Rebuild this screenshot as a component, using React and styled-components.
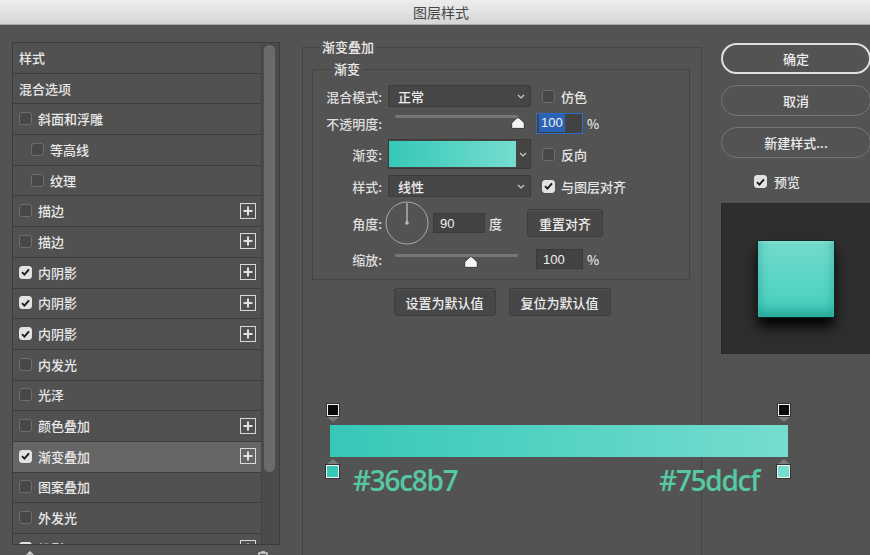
import React from "react";
import styled, { createGlobalStyle } from "styled-components";

const GlobalStyle = createGlobalStyle`
  html, body { margin: 0; padding: 0; background: #535353; }
  body { font-family: "Noto Sans CJK SC", "Noto Sans", sans-serif; }
  * { box-sizing: border-box; }
`;

const Window = styled.div`
  width: 870px;
  height: 555px;
  overflow: hidden;
  display: flex;
  flex-direction: column;
  background: #535353;
  color: #e6e6e6;
  font-size: 13px;
  font-weight: 500;
`;

const TitleBar = styled.div`
  height: 25px;
  flex: none;
  display: flex;
  align-items: center;
  justify-content: center;
  padding-left: 12px;
  background: linear-gradient(#ededed, #d5d5d5);
  border-bottom: 1px solid #a8a8a8;
  color: #474747;
  font-size: 14px;
  font-weight: 400;
`;

const Body = styled.div`
  flex: 1;
  display: flex;
  align-items: flex-start;
  min-height: 0;
`;

/* ---------- left list ---------- */
const LeftPanel = styled.div`
  flex: none;
  margin: 17px 0 0 12px;
  width: 268px;
  display: flex;
  flex-direction: column;
`;

const ListBox = styled.div`
  height: 503px;
  display: flex;
  border: 1px solid #3c3c3c;
  overflow: hidden;
`;

const List = styled.div`
  flex: 1;
  display: flex;
  flex-direction: column;
`;

const Row = styled.div`
  flex: none;
  height: 30.7px;
  display: flex;
  align-items: center;
  gap: 6px;
  padding: 0 5px 1px ${(p) => (p.$indent ? 18 : 6)}px;
  border-bottom: 1px solid #3e3e3e;
  background: ${(p) => (p.$selected ? "#666666" : "#515151")};
  color: #e8e8e8;
  font-size: 13px;
  white-space: nowrap;
`;

const ScrollTrack = styled.div`
  flex: none;
  width: 18px;
  background: #4b4b4b;
  border-left: 1px solid #454545;
  padding: 2px 4px 0 2px;
`;

const ScrollThumb = styled.div`
  height: 427px;
  border-radius: 6px;
  background: #6b6b6b;
`;

const ListToolbar = styled.div`
  height: 20px;
  display: flex;
  justify-content: space-between;
  padding: 6px 12px 0 14px;
`;

const ToolIcon = styled.svg`
  flex: none;
`;

const CheckBoxBox = styled.span`
  flex: none;
  width: 13px;
  height: 13px;
  border-radius: 3px;
  display: inline-flex;
  align-items: center;
  justify-content: center;
  background: ${(p) => (p.$checked ? "#e2e2e2" : "#474747")};
  border: 1px solid ${(p) => (p.$checked ? "#e2e2e2" : "#6e6e6e")};
`;

const PlusBox = styled.span`
  flex: none;
  margin-left: auto;
  width: 16px;
  height: 16px;
  border: 1.5px solid #d8d8d8;
  display: inline-flex;
  align-items: center;
  justify-content: center;
`;

const Check = ({ checked }) => (
  <CheckBoxBox $checked={checked}>
    {checked && (
      <svg width="9" height="8" viewBox="0 0 9 8">
        <path d="M1 4.2 L3.4 6.6 L8 1.3" fill="none" stroke="#1c1c1c" strokeWidth="1.9" />
      </svg>
    )}
  </CheckBoxBox>
);

const Plus = () => (
  <PlusBox>
    <svg width="10" height="10" viewBox="0 0 10 10">
      <path d="M5 0.5v9M0.5 5h9" stroke="#e2e2e2" strokeWidth="2" />
    </svg>
  </PlusBox>
);

/* ---------- middle ---------- */
const Middle = styled.div`
  flex: none;
  margin: 14px 0 0 22px;
  width: 400px;
`;

const OuterSet = styled.fieldset`
  margin: 0;
  min-width: 0;
  height: 560px;
  padding: 0 11px 0 9px;
  border: 1px solid #444444;
`;

const Legend = styled.legend`
  margin-left: ${(p) => p.$ml}px;
  padding: 0 3px;
  font-size: 13px;
  line-height: 16px;
  color: #ececec;
`;

const InnerSet = styled.fieldset`
  margin: 6px 0 0 0;
  min-width: 0;
  padding: 8px 8px 6px 9px;
  border: 1px solid #444444;
`;

const FormRow = styled.div`
  display: flex;
  align-items: center;
  height: ${(p) => p.$h}px;
  margin-top: ${(p) => p.$mt || 0}px;
`;

const Label = styled.span`
  flex: none;
  width: 60px;
  margin-right: 6px;
  text-align: right;
  color: #dedede;
  white-space: nowrap;
`;

const Select = styled.div`
  flex: none;
  width: 143px;
  height: 22px;
  display: flex;
  align-items: center;
  justify-content: space-between;
  padding: 0 5px 0 9px;
  background: #464646;
  border: 1px solid #3b3b3b;
  border-radius: 2px;
  color: #eeeeee;
`;

const Chevron = () => (
  <svg width="8" height="5" viewBox="0 0 8 5">
    <path d="M1 1 L4 4 L7 1" fill="none" stroke="#cfcfcf" strokeWidth="1.2" />
  </svg>
);

const CheckLabel = styled.label`
  display: flex;
  align-items: center;
  gap: 6px;
  margin-left: ${(p) => p.$ml}px;
  color: #e6e6e6;
  white-space: nowrap;
`;

const SliderWrap = styled.div`
  position: relative;
  flex: none;
  width: 132px;
  height: 16px;
  margin: ${(p) => p.$shift || 0}px 9px 0 7px;
  align-self: center;
`;

const Track = styled.div`
  width: 123px;
  height: 3px;
  background: #767676;
  border-radius: 1px;
`;

const Thumb = styled.svg`
  position: absolute;
  top: 2px;
`;

const Slider = ({ value, shift }) => (
  <SliderWrap $shift={shift}>
    <Track />
    <Thumb width="14" height="12" viewBox="0 0 14 12" style={{ left: `${(value / 100) * 123 - 7}px` }}>
      <path d="M7 0.6 Q8 0.6 13.3 6 L13.3 11.4 L0.7 11.4 L0.7 6 Q6 0.6 7 0.6 Z" fill="#f4f4f4" stroke="#2a2a2a" strokeWidth="0.9" />
    </Thumb>
  </SliderWrap>
);

const NumInput = styled.div`
  flex: none;
  width: ${(p) => p.$w}px;
  height: ${(p) => p.$hh || 20}px;
  display: flex;
  align-items: center;
  padding-left: ${(p) => (p.$focus ? 2 : 6)}px;
  background: #424242;
  border: 1px solid ${(p) => (p.$focus ? "#2e6ccc" : "#3a3a3a")};
  color: #f0f0f0;
  font-family: "Liberation Sans", Arial, sans-serif;
  font-weight: 400;
  font-size: 13px;
`;

const Selected = styled.span`
  background: #2a63b6;
  padding: 1px 2px;
  line-height: 16px;
`;

const Unit = styled.span`
  margin-left: ${(p) => p.$ml || 4}px;
  color: #e0e0e0;
`;

const GradientPick = styled.div`
  flex: none;
  width: 143px;
  height: 30px;
  display: flex;
  background: #454545;
  border: 1px solid #3a3a3a;
`;

const Swatch = styled.div`
  width: 127px;
  margin: 1px 0 1px 0;
  background: linear-gradient(90deg, #36c8b7, #75ddcf);
`;

const SwatchDrop = styled.div`
  flex: 1;
  display: flex;
  align-items: center;
  justify-content: center;
`;

const Dial = styled.svg`
  flex: none;
  margin: 0 4px 0 -3px;
`;

const Button = styled.div`
  flex: none;
  width: ${(p) => p.$w}px;
  height: 28px;
  display: flex;
  align-items: center;
  justify-content: center;
  margin-left: ${(p) => p.$ml || 0}px;
  background: #474747;
  border: 1px solid #3c3c3c;
  border-radius: 3px;
  box-shadow: inset 0 1px 0 #525252;
  color: #ececec;
  font-size: 13px;
`;

const ButtonRow = styled.div`
  display: flex;
  justify-content: center;
  gap: 13px;
  margin-top: 8px;
  padding-left: 2px;
`;

/* ---------- gradient editor ---------- */
const GradEditor = styled.div`
  width: 464px;
  margin: 88px 0 0 14px;
`;

const StopRow = styled.div`
  display: flex;
  align-items: flex-start;
  justify-content: space-between;
`;

const Stop = styled.div`
  display: flex;
  flex-direction: column;
  align-items: center;
  gap: 1px;
  width: 13px;
`;

const StopSquare = styled.div`
  width: ${(p) => p.$s}px;
  height: ${(p) => p.$s}px;
  background: ${(p) => p.$color};
  border: 1.5px solid #f2f2f2;
  box-shadow: 0 0 0 1px #333;
`;

const Tri = styled.div`
  width: 0;
  height: 0;
  border-left: 6px solid transparent;
  border-right: 6px solid transparent;
  ${(p) => (p.$up ? "border-bottom: 5px solid #7a7a7a;" : "border-top: 5px solid #7a7a7a;")}
`;

const GradBar = styled.div`
  width: 458px;
  height: 32px;
  margin: 3px 0 2px 4px;
  background: linear-gradient(90deg, #36c8b7, #75ddcf);
`;

const HexRow = styled.div`
  display: flex;
  align-items: flex-start;
`;

const HexLabel = styled.span`
  margin: ${(p) => p.$m};
  font-family: "Open Sans", "Noto Sans", sans-serif;
  font-weight: 600;
  font-size: 28px;
  line-height: 28px;
  letter-spacing: -1.3px;
  color: #56c8a3;
`;

/* ---------- right column ---------- */
const RightCol = styled.div`
  flex: none;
  margin: 18px 0 0 19px;
  width: 150px;
  display: flex;
  flex-direction: column;
`;

const Pill = styled.div`
  height: 31px;
  border-radius: 16px;
  display: flex;
  align-items: center;
  justify-content: center;
  border: ${(p) => (p.$primary ? "2px solid #e0e0e0" : "1px solid #757575")};
  color: #ececec;
  font-size: 13px;
  & + & {
    margin-top: 11px;
  }
`;

const PreviewCheck = styled(CheckLabel)`
  margin: 14px 0 0 33px;
  gap: 7px;
`;

const PreviewBox = styled.div`
  margin-top: 12px;
  height: 151px;
  width: 160px;
  background: #2e2e2e;
  border: 1px solid #292929;
  padding: 37px 0 0 36px;
`;

const PreviewSquare = styled.div`
  width: 76px;
  height: 76px;
  background: linear-gradient(0deg, #45cfbe, #72dccd);
  box-shadow: inset 0 -7px 12px rgba(0, 120, 105, 0.45), inset 0 2px 2px rgba(255, 255, 255, 0.2),
    0 0 0 1px rgba(10, 40, 36, 0.8), 0 10px 12px rgba(0, 0, 0, 0.95);
`;

const items = [
  { label: "样式" },
  { label: "混合选项" },
  { label: "斜面和浮雕", cb: false },
  { label: "等高线", cb: false, indent: true },
  { label: "纹理", cb: false, indent: true },
  { label: "描边", cb: false, plus: true },
  { label: "描边", cb: false, plus: true },
  { label: "内阴影", cb: true, plus: true },
  { label: "内阴影", cb: true, plus: true },
  { label: "内阴影", cb: true, plus: true },
  { label: "内发光", cb: false },
  { label: "光泽", cb: false },
  { label: "颜色叠加", cb: false, plus: true },
  { label: "渐变叠加", cb: true, plus: true, selected: true },
  { label: "图案叠加", cb: false },
  { label: "外发光", cb: false },
  { label: "投影", cb: true, plus: true },
];

export default function App() {
  return (
    <>
      <GlobalStyle />
      <Window>
        <TitleBar>图层样式</TitleBar>
        <Body>
          <LeftPanel>
            <ListBox>
              <List>
                {items.map((it, i) => (
                  <Row key={i} $indent={it.indent} $selected={it.selected}>
                    {it.cb !== undefined && <Check checked={it.cb} />}
                    <span>{it.label}</span>
                    {it.plus && <Plus />}
                  </Row>
                ))}
              </List>
              <ScrollTrack>
                <ScrollThumb />
              </ScrollTrack>
            </ListBox>
            <ListToolbar>
              <ToolIcon width="8" height="10" viewBox="0 0 8 10">
                <path d="M4 1 L4 9 M1 4 L4 1 L7 4" fill="none" stroke="#cfcfcf" strokeWidth="1.5" />
              </ToolIcon>
              <ToolIcon width="10" height="10" viewBox="0 0 10 10">
                <rect x="1" y="2" width="8" height="8" fill="none" stroke="#cfcfcf" strokeWidth="1.5" />
                <path d="M3 1 h4" stroke="#cfcfcf" strokeWidth="1.5" />
              </ToolIcon>
            </ListToolbar>
          </LeftPanel>

          <Middle>
            <OuterSet>
              <Legend $ml={7}>渐变叠加</Legend>
              <InnerSet>
                <Legend $ml={9}>渐变</Legend>
                <FormRow $h={22}>
                  <Label>混合模式:</Label>
                  <Select>
                    <span>正常</span>
                    <Chevron />
                  </Select>
                  <CheckLabel $ml={11}>
                    <Check checked={false} />
                    仿色
                  </CheckLabel>
                </FormRow>
                <FormRow $h={32}>
                  <Label>不透明度:</Label>
                  <Slider value={100} />
                  <NumInput $w={47} $hh={21} $focus>
                    <Selected>100</Selected>
                  </NumInput>
                  <Unit>%</Unit>
                </FormRow>
                <FormRow $h={30}>
                  <Label>渐变:</Label>
                  <GradientPick>
                    <Swatch />
                    <SwatchDrop>
                      <Chevron />
                    </SwatchDrop>
                  </GradientPick>
                  <CheckLabel $ml={11}>
                    <Check checked={false} />
                    反向
                  </CheckLabel>
                </FormRow>
                <FormRow $h={22} $mt={6}>
                  <Label>样式:</Label>
                  <Select>
                    <span>线性</span>
                    <Chevron />
                  </Select>
                  <CheckLabel $ml={11}>
                    <Check checked />
                    与图层对齐
                  </CheckLabel>
                </FormRow>
                <FormRow $h={44} $mt={4}>
                  <Label>角度:</Label>
                  <Dial width="44" height="44" viewBox="0 0 44 44">
                    <circle cx="22" cy="22" r="21" fill="none" stroke="#a8a8a8" strokeWidth="1" />
                    <line x1="22" y1="22" x2="22" y2="2" stroke="#bdbdbd" strokeWidth="1.3" />
                    <circle cx="22" cy="22" r="1.8" fill="#bdbdbd" />
                  </Dial>
                  <NumInput $w={52}>90</NumInput>
                  <Unit>度</Unit>
                  <Button $w={76} $ml={25}>
                    重置对齐
                  </Button>
                </FormRow>
                <FormRow $h={28}>
                  <Label>缩放:</Label>
                  <Slider value={62} shift={6} />
                  <NumInput $w={47}>100</NumInput>
                  <Unit>%</Unit>
                </FormRow>
              </InnerSet>
              <ButtonRow>
                <Button $w={102}>设置为默认值</Button>
                <Button $w={102}>复位为默认值</Button>
              </ButtonRow>

              <GradEditor>
                <StopRow>
                  <Stop>
                    <StopSquare $s={12} $color="#0a0a0a" />
                    <Tri />
                  </Stop>
                  <Stop>
                    <StopSquare $s={12} $color="#0a0a0a" />
                    <Tri />
                  </Stop>
                </StopRow>
                <GradBar />
                <StopRow>
                  <HexRow>
                    <Stop>
                      <Tri $up />
                      <StopSquare $s={13} $color="#36c8b7" />
                    </Stop>
                    <HexLabel $m="7px 0 0 14px">#36c8b7</HexLabel>
                  </HexRow>
                  <HexRow>
                    <HexLabel $m="7px 18px 0 0">#75ddcf</HexLabel>
                    <Stop>
                      <Tri $up />
                      <StopSquare $s={13} $color="#75ddcf" />
                    </Stop>
                  </HexRow>
                </StopRow>
              </GradEditor>
            </OuterSet>
          </Middle>

          <RightCol>
            <Pill $primary>确定</Pill>
            <Pill>取消</Pill>
            <Pill>新建样式...</Pill>
            <PreviewCheck>
              <Check checked />
              预览
            </PreviewCheck>
            <PreviewBox>
              <PreviewSquare />
            </PreviewBox>
          </RightCol>
        </Body>
      </Window>
    </>
  );
}
